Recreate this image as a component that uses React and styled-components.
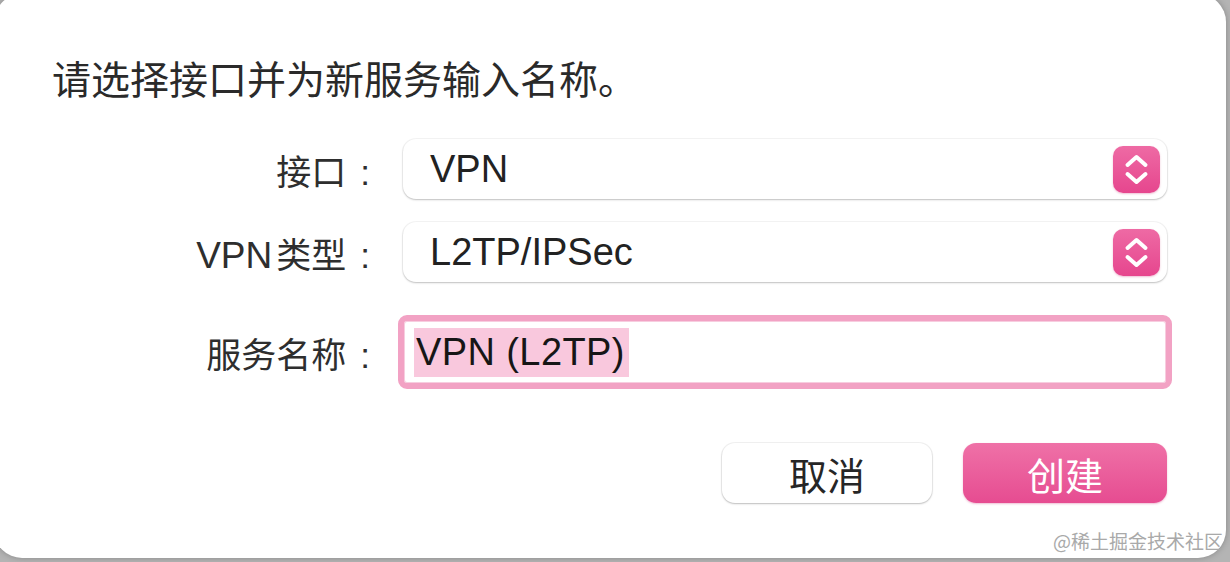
import styled, { createGlobalStyle } from 'styled-components'

const GlobalStyle = createGlobalStyle`
    html, body {
        margin: 0;
        padding: 0;
        width: 1230px;
        height: 562px;
        overflow: hidden;
        background: #b4b4b4;
    }
    body {
        font-family: "Liberation Sans", "Noto Sans CJK SC", sans-serif;
        color: #262626;
    }
`;

function Stepper() {
    return <StepBox>
        <svg width="47" height="47" viewBox="0 0 47 47" fill="none" stroke="#fff" strokeWidth="4" strokeLinecap="round" strokeLinejoin="round">
            <path d="M14.5 19 L23.5 11 L32.5 19" />
            <path d="M14.5 28 L23.5 36 L32.5 28" />
        </svg>
    </StepBox>;
}

export default function App() {
    return <>
        <GlobalStyle />
        <Panel>
            <Title>请选择接口并为新服务输入名称。</Title>
            <Form>
                <Label>接口<Colon>:</Colon></Label>
                <Popup>
                    <PopupText>VPN</PopupText>
                    <Stepper />
                </Popup>
                <Label $top={23}><Latin>VPN</Latin>类型<Colon>:</Colon></Label>
                <Popup $top={23}>
                    <PopupText>L2TP/IPSec</PopupText>
                    <Stepper />
                </Popup>
                <Label $top={33}>服务名称<Colon>:</Colon></Label>
                <Field $top={33}>
                    <Selected>VPN (L2TP)</Selected>
                </Field>
            </Form>
            <Buttons>
                <Button>取消</Button>
                <Button $primary>创建</Button>
            </Buttons>
            <Watermark>@稀土掘金技术社区</Watermark>
        </Panel>
    </>;
}

const Panel = styled.div`
    position: relative;
    box-sizing: border-box;
    margin: -6px 0 0 -6px;
    width: 1232px;
    height: 564px;
    padding: 66px 59px 0 61px;
    background: #fff;
    border-radius: 28px;
    box-shadow: 0 0 6px rgba(0, 0, 0, 0.25);
    display: flex;
    flex-direction: column;
`;
const Title = styled.div`
    margin-left: -3px;
    font-size: 39px;
    line-height: 42px;
    color: #2a2a2a;
`;
const Form = styled.div`
    margin-top: 37px;
    display: grid;
    grid-template-columns: 317px 764px;
    column-gap: 31px;
    align-items: center;
`;
const Label = styled.div`
    margin-top: ${p => p.$top || 0}px;
    text-align: right;
    font-size: 35px;
    color: #2e2e2e;
    white-space: pre;
`;
const Latin = styled.span`
    font-size: 37px;
    margin-right: 4px;
`;
const Colon = styled.span`
    font-family: "Liberation Sans", sans-serif;
    margin-left: 14px;
    margin-right: 2px;
`;
const Popup = styled.div`
    margin-top: ${p => p.$top || 0}px;
    height: 60px;
    box-sizing: border-box;
    border-radius: 13px;
    background: #fff;
    box-shadow: 0 1px 2px rgba(0, 0, 0, 0.22), 0 0 0 1px rgba(0, 0, 0, 0.04);
    display: flex;
    align-items: center;
    justify-content: space-between;
    padding: 0 7px 0 27px;
`;
const PopupText = styled.span`
    font-size: 38px;
    color: #222;
`;
const StepBox = styled.div`
    width: 47px;
    height: 47px;
    border-radius: 10px;
    background: linear-gradient(180deg, #ee6aa4 0%, #e6468e 100%);
    box-shadow: 0 1px 2px rgba(200, 40, 110, 0.3);
    display: flex;
`;
const Field = styled.div`
    margin: ${p => p.$top || 0}px -5px 0;
    height: 74px;
    box-sizing: border-box;
    border: 6px solid #f2a2c4;
    border-radius: 9px;
    background: #fff;
    box-shadow: inset 0 0 0 1px #f7cddf;
    display: flex;
    align-items: center;
    padding-left: 10px;
`;
const Selected = styled.span`
    background: #f9c8dd;
    font-size: 38px;
    letter-spacing: 0.4px;
    line-height: 49px;
    padding: 0 4px 0 2px;
    color: #161616;
`;
const Buttons = styled.div`
    margin-top: 54px;
    display: flex;
    justify-content: flex-end;
    gap: 31px;
`;
const Button = styled.div`
    width: ${p => p.$primary ? 204 : 210}px;
    height: 60px;
    box-sizing: border-box;
    border-radius: 13px;
    display: flex;
    align-items: center;
    justify-content: center;
    font-size: 38px;
    color: ${p => p.$primary ? '#fff' : '#262626'};
    background: ${p => p.$primary ? 'linear-gradient(180deg, #ef71a7 0%, #e64c91 100%)' : '#fff'};
    box-shadow: ${p => p.$primary ? '0 1px 2px rgba(200, 40, 110, 0.3)' : '0 1px 2px rgba(0, 0, 0, 0.22), 0 0 0 1px rgba(0, 0, 0, 0.05)'};
`;
const Watermark = styled.div`
    position: absolute;
    right: 3px;
    bottom: 4px;
    font-family: "Noto Sans CJK SC", sans-serif;
    font-size: 19px;
    color: #a9a9a9;
`;
